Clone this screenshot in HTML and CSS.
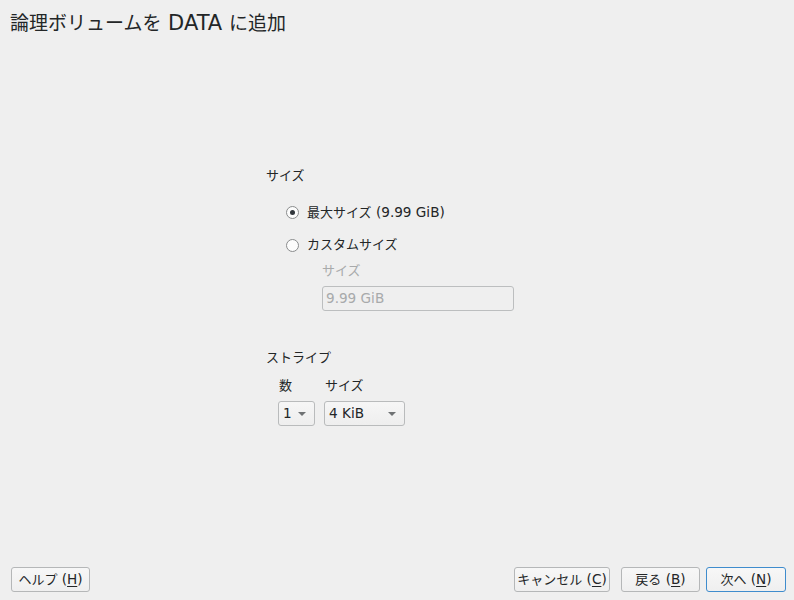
FILE: index.html
```html
<!DOCTYPE html>
<html lang="ja">
<head>
<meta charset="utf-8">
<link rel="stylesheet" href="styles.css">
</head>
<body>
<div class="window">
  <h1 class="title">論理ボリュームを<span class="l"> DATA </span>に追加</h1>
  <main class="main">
    <section class="group">
      <div class="group-title">サイズ</div>
      <label class="radio-row first">
        <span class="radio checked"></span>
        <span class="radio-text">最大サイズ<span class="l"> (9.99 GiB)</span></span>
      </label>
      <label class="radio-row second">
        <span class="radio"></span>
        <span class="radio-text">カスタムサイズ</span>
      </label>
      <div class="sub">
        <div class="sub-label">サイズ</div>
        <div class="input"><span class="l">9.99 GiB</span></div>
      </div>
    </section>
    <section class="group stripes">
      <div class="group-title">ストライプ</div>
      <div class="stripe-grid">
        <div class="col-label">数</div>
        <div class="col-label">サイズ</div>
        <div class="combo small"><span class="l">1</span><span class="arrow"></span></div>
        <div class="combo wide"><span class="l">4 KiB</span><span class="arrow"></span></div>
      </div>
    </section>
  </main>
  <footer class="footer">
    <button class="btn help">ヘルプ<span class="l"> (<u>H</u>)</span></button>
    <div class="spacer"></div>
    <button class="btn cancel">キャンセル<span class="l"> (<u>C</u>)</span></button>
    <button class="btn back">戻る<span class="l"> (<u>B</u>)</span></button>
    <button class="btn next">次へ<span class="l"> (<u>N</u>)</span></button>
  </footer>
</div>
</body>
</html>
```

FILE: styles.css
```css
* { box-sizing: border-box; }
html, body { margin: 0; padding: 0; }
body {
  background: #efefef;
  color: #232627;
  font-family: "DejaVu Sans", "Noto Sans CJK JP", sans-serif;
  font-size: 13px;
}
.l { font-size: 13.6px; }
.window {
  width: 794px;
  height: 600px;
  display: flex;
  flex-direction: column;
}
.title {
  margin: 0;
  height: 46px;
  padding: 9px 0 0 10px;
  font-size: 19px;
  font-weight: normal;
  line-height: 28px;
}
.title .l { font-size: 21px; }
.main {
  flex: 1;
  padding: 121px 0 0 266px;
}
.group-title {
  height: 18px;
  line-height: 18px;
}
.radio-row {
  display: flex;
  align-items: center;
  height: 22px;
  padding-left: 20px;
}
.radio-row.first { margin-top: 16px; }
.radio-row.second { margin-top: 11px; }
.radio {
  width: 13px;
  height: 13px;
  border: 1px solid #8a8c8d;
  border-radius: 50%;
  background: #fcfcfc;
  margin-right: 8px;
  position: relative;
}
.radio.checked::after {
  content: "";
  position: absolute;
  left: 3px;
  top: 3px;
  width: 5px;
  height: 5px;
  border-radius: 50%;
  background: #31363b;
}
.radio-text { line-height: 22px; }
.sub { padding-left: 56px; margin-top: 6px; }
.sub-label {
  height: 18px;
  line-height: 18px;
  color: #a8aaab;
}
.input {
  margin-top: 6px;
  width: 192px;
  height: 25px;
  border: 1px solid #bcbebf;
  border-radius: 3px;
  background: #efefef;
  color: #a8aaab;
  padding-left: 3px;
  line-height: 23px;
}
.stripes { margin-top: 38px; }
.stripe-grid {
  display: grid;
  grid-template-columns: 37px 81px;
  column-gap: 9px;
  row-gap: 6px;
  padding-left: 12px;
  margin-top: 10px;
}
.col-label {
  height: 18px;
  line-height: 18px;
  padding-left: 1px;
}
.combo {
  height: 25px;
  border: 1px solid #b9bbbc;
  border-radius: 3px;
  background: linear-gradient(#f6f6f6, #eeeeee);
  display: flex;
  align-items: center;
  justify-content: space-between;
  padding: 0 8px 0 4px;
  line-height: 23px;
}
.arrow {
  width: 0;
  height: 0;
  border-left: 4px solid transparent;
  border-right: 4px solid transparent;
  border-top: 4px solid #6f7274;
}
.footer {
  display: flex;
  align-items: center;
  padding: 0 8px 8px 11px;
}
.spacer { flex: 1; }
.btn {
  height: 25px;
  border: 1px solid #b5b7b8;
  border-radius: 3px;
  background: linear-gradient(#f7f7f7, #efefef);
  color: #232627;
  font-family: "DejaVu Sans", "Noto Sans CJK JP", sans-serif;
  font-size: 13px;
  padding: 0;
  line-height: 23px;
  white-space: nowrap;
}
.btn u { text-decoration-thickness: 1px; text-underline-offset: 2px; }
.help { width: 79px; }
.cancel { width: 96px; }
.back { width: 79px; margin-left: 11px; }
.next { width: 80px; margin-left: 6px; border-color: #3f8ccd; }
```
